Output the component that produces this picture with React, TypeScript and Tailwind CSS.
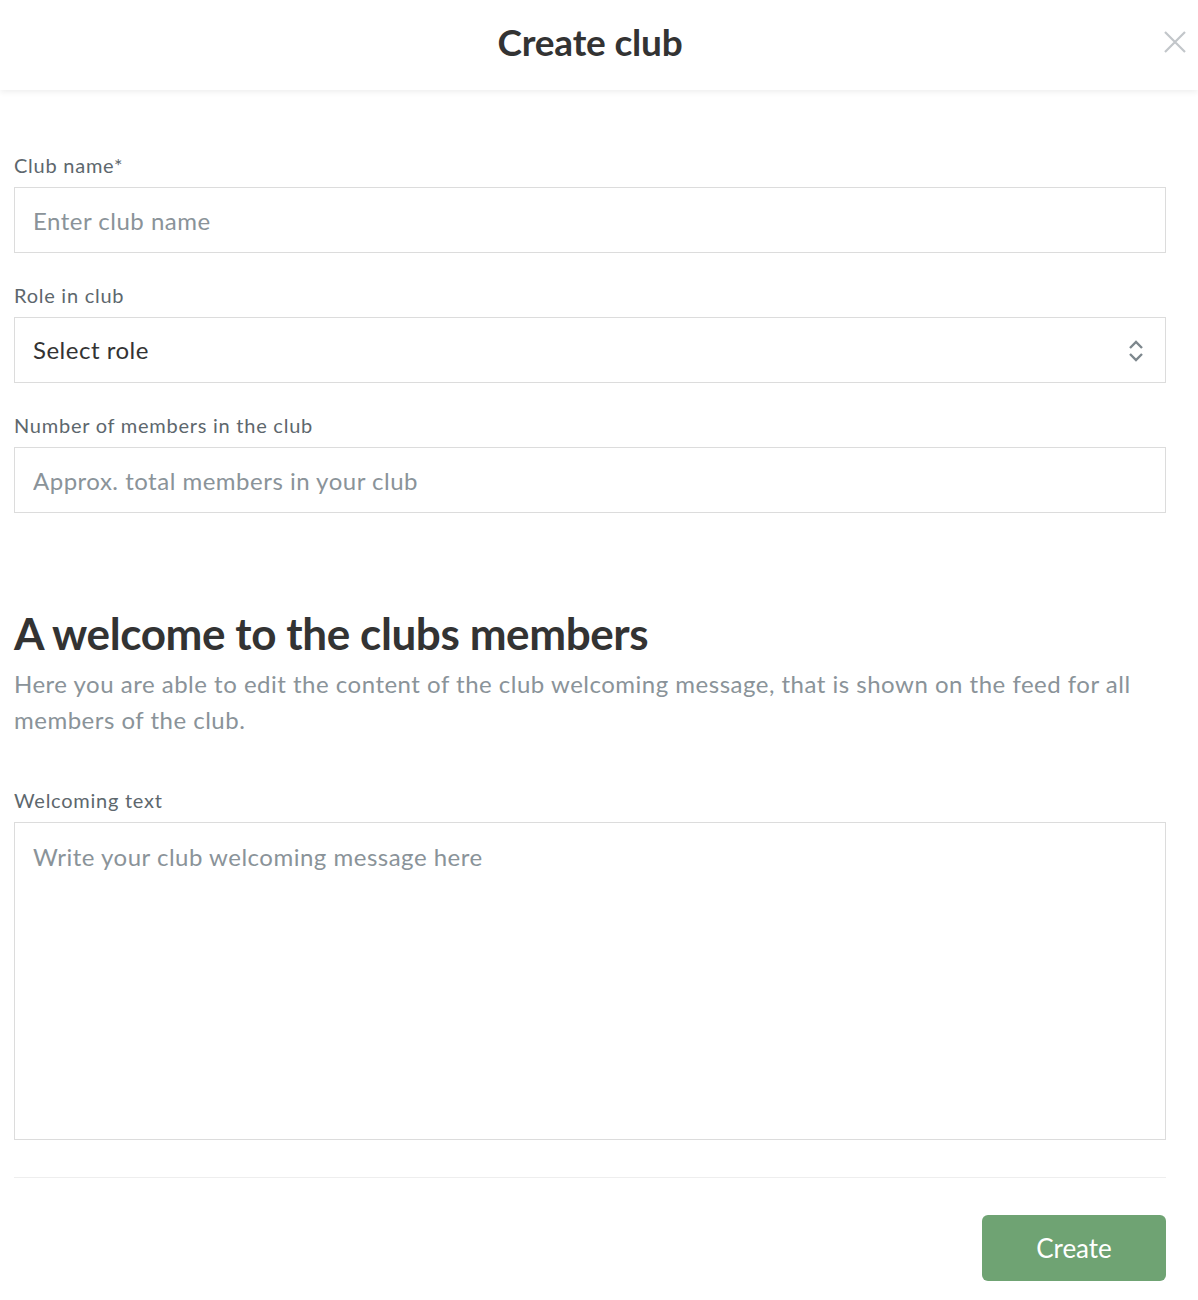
import React from "react";

const Field = ({ label, children }: { label: string; children: React.ReactNode }) => (
  <div className="flex flex-col">
    <label className="text-[20px] leading-[24px] tracking-[0.75px] text-[#5d676d]">{label}</label>
    <div className="mt-[10px]">{children}</div>
  </div>
);

const inputCls =
  "w-full h-[66px] border border-[#dcdcdc] bg-white px-[18px] text-[24px] tracking-[0.5px] text-[#333] placeholder-[#8a9399] outline-none";

const App = () => {
  return (
    <div className="w-[1198px] h-[1300px] bg-white font-['Lato','Open_Sans',sans-serif] text-[#333] overflow-hidden">
      <header className="relative h-[90px] pr-[18px] pb-[6px] flex items-center justify-center bg-white shadow-[0_2px_6px_rgba(0,0,0,0.07)]">
        <h1 className="text-[37px] font-bold text-[#333] tracking-[-0.2px]">Create club</h1>
        <button className="absolute right-[12px] top-[31px] text-[#c2c6ca]">
          <svg width="22" height="22" viewBox="0 0 22 22" fill="none" stroke="currentColor" strokeWidth="2.2">
            <path d="M1 1L21 21M21 1L1 21" />
          </svg>
        </button>
      </header>

      <main className="pl-[14px] pr-[32px] pt-[63px] flex flex-col">
        <div className="flex flex-col gap-[30px]">
          <Field label="Club name*">
            <input className={inputCls} placeholder="Enter club name" />
          </Field>
          <Field label="Role in club">
            <div className="relative w-full h-[66px] border border-[#dcdcdc] flex items-center px-[18px]">
              <span className="text-[24px] tracking-[0.5px] text-[#333]">Select role</span>
              <svg
                className="absolute right-[20px] top-[20px]"
                width="18"
                height="26"
                viewBox="0 0 18 26"
                fill="none"
                stroke="#7d878d"
                strokeWidth="2.4"
              >
                <path d="M3 10L9 4L15 10" />
                <path d="M3 16L9 22L15 16" />
              </svg>
            </div>
          </Field>
          <Field label="Number of members in the club">
            <input className={inputCls} placeholder="Approx. total members in your club" />
          </Field>
        </div>

        <h2 className="mt-[94px] text-[44px] leading-[52px] font-bold text-[#333] tracking-[-0.4px]">
          A welcome to the clubs members
        </h2>
        <p className="mt-[7px] text-[24px] leading-[36px] tracking-[0.5px] text-[#8a9399]">
          Here you are able to edit the content of the club welcoming message, that is shown on the feed for all members of the club.
        </p>

        <div className="mt-[50px]">
          <Field label="Welcoming text">
            <textarea
              className="w-full h-[318px] block border border-[#dcdcdc] px-[18px] py-[18px] text-[24px] leading-[32px] tracking-[0.5px] text-[#333] placeholder-[#8a9399] outline-none resize-none"
              placeholder="Write your club welcoming message here"
            />
          </Field>
        </div>

        <div className="mt-[37px] h-px bg-[#eeeeee]" />

        <div className="mt-[37px] flex justify-end">
          <button className="w-[184px] h-[66px] rounded-[6px] bg-[#6fa373] text-white text-[26px]">Create</button>
        </div>
      </main>
    </div>
  );
};

export default App;
